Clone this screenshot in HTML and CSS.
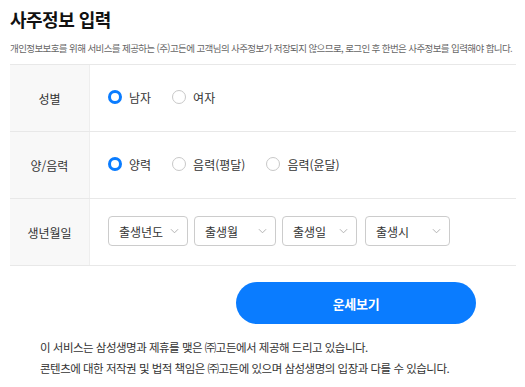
FILE: index.html
```html
<!DOCTYPE html>
<html lang="ko">
<head>
<meta charset="UTF-8">
<title>사주정보 입력</title>
<link rel="stylesheet" href="styles.css">
</head>
<body>
<div class="wrap">
  <h1 class="title">사주정보 입력</h1>
  <p class="desc">개인정보보호를 위해 서비스를 제공하는 (주)고든에 고객님의 사주정보가 저장되지 않으므로, 로그인 후 한번은 사주정보를 입력해야 합니다.</p>

  <div class="form">
    <div class="row">
      <div class="label">성별</div>
      <div class="field">
        <label class="radio on"><span class="dot"></span>남자</label>
        <label class="radio"><span class="dot"></span>여자</label>
      </div>
    </div>
    <div class="row">
      <div class="label">양/음력</div>
      <div class="field">
        <label class="radio on"><span class="dot"></span>양력</label>
        <label class="radio"><span class="dot"></span>음력(평달)</label>
        <label class="radio"><span class="dot"></span>음력(윤달)</label>
      </div>
    </div>
    <div class="row">
      <div class="label">생년월일</div>
      <div class="field selects">
        <div class="select w-year">출생년도<svg viewBox="0 0 10 6"><path d="M1 1l4 4 4-4"/></svg></div>
        <div class="select w-month">출생월<svg viewBox="0 0 10 6"><path d="M1 1l4 4 4-4"/></svg></div>
        <div class="select w-day">출생일<svg viewBox="0 0 10 6"><path d="M1 1l4 4 4-4"/></svg></div>
        <div class="select w-hour">출생시<svg viewBox="0 0 10 6"><path d="M1 1l4 4 4-4"/></svg></div>
      </div>
    </div>
  </div>

  <div class="actions"><button class="btn">운세보기</button></div>

  <div class="notice">
    <p>이 서비스는 삼성생명과 제휴를 맺은 ㈜고든에서 제공해 드리고 있습니다.</p>
    <p>콘텐츠에 대한 저작권 및 법적 책임은 ㈜고든에 있으며 삼성생명의 입장과 다를 수 있습니다.</p>
  </div>
</div>
</body>
</html>
```

FILE: styles.css
```css
*{margin:0;padding:0;box-sizing:border-box}
body{background:#fff;font-family:'Noto Sans CJK KR','Noto Sans',sans-serif;color:#333}
.wrap{padding:8px 9px 0 10px}
.title{font-size:18px;font-weight:700;color:#111;letter-spacing:-0.5px;line-height:22px}
.desc{margin-top:12px;font-size:9.5px;color:#666;letter-spacing:-0.6px;line-height:12px;white-space:nowrap}
.form{margin-top:10px;border-top:1px solid #e8e8e8}
.row{display:flex;border-bottom:1px solid #e8e8e8;height:67px}
.label{width:80px;background:#f8f8f8;border-right:1px solid #eee;display:flex;align-items:center;justify-content:center;font-size:12px;color:#333}
.field{flex:1;display:flex;align-items:center;padding-left:18px;padding-bottom:2px}
.radio{display:flex;align-items:center;font-size:12px;color:#333;margin-right:21px}
.dot{width:14px;height:14px;border-radius:50%;border:1px solid #c8c8c8;margin-right:7px;background:#fff}
.radio.on .dot{border:3.5px solid #0a7cff}
.selects{gap:6px}
.select{height:30px;border:1px solid #ccc;border-radius:4px;display:flex;align-items:center;justify-content:space-between;padding:0 8px 0 10px;font-size:12px;color:#333}
.select svg{width:9px;height:6px;fill:none;stroke:#aaa;stroke-width:1}
.w-year{width:80px}
.w-month{width:82px}
.w-day{width:75px}
.w-hour{width:85px;margin-left:2px}
.actions{padding:16px 0 0 226px}
.btn{width:240px;height:42px;border:none;border-radius:21px;background:#0a7cff;color:#fff;font-family:'Noto Sans CJK KR',sans-serif;font-size:13px;font-weight:700;letter-spacing:-0.3px}
.notice{padding:13px 0 0 30px;font-size:11.5px;color:#333;line-height:21px;letter-spacing:-0.5px}
```
